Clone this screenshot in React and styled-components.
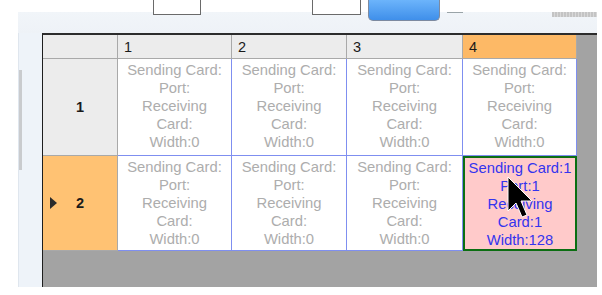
import { createGlobalStyle, styled } from "styled-components";

const GlobalStyle = createGlobalStyle`
  html, body {
    margin: 0;
    padding: 0;
    background: #ffffff;
    font-family: "Liberation Sans", Arial, sans-serif;
  }
`;

const Page = styled.div`
  width: 602px;
  height: 295px;
  overflow: hidden;
  background: #ffffff;
`;

const Toolbar = styled.div`
  display: flex;
  align-items: flex-start;
  height: 33px;
  margin-left: 18px;
  width: 579px;
  background: linear-gradient(#ffffff 0, #ffffff 12px, #f1f5f9 12px, #eef2f7 100%);
  box-sizing: border-box;
`;

const Field = styled.div`
  width: ${(p) => p.$w}px;
  height: 15px;
  margin-left: ${(p) => p.$gap}px;
  box-sizing: border-box;
  background: #ffffff;
  border: 1px solid #6a6a6a;
  border-top: none;
`;

const BlueButton = styled.div`
  width: 72px;
  height: 21px;
  margin-left: 7px;
  box-sizing: border-box;
  border: 1px solid #7d8aa0;
  border-top: none;
  border-radius: 0 0 5px 5px;
  background: linear-gradient(#6cb4fb, #3f8fea);
`;

const Rule = styled.div`
  width: 16px;
  height: 1px;
  margin-top: 12px;
  margin-left: 7px;
  background: #9aa4a8;
`;

const Hatch = styled.div`
  width: 45px;
  height: 5px;
  margin-top: 12px;
  margin-left: auto;
  background: repeating-linear-gradient(90deg, #c4c4c4 0 2px, #d8d8d8 2px 3px);
`;

const Body = styled.div`
  display: flex;
  margin-left: 18px;
  width: 579px;
  height: 254px;
`;

const SideStrip = styled.div`
  width: 24px;
  background: #eef3f9;
  border-left: 1px solid #dfe6ee;
  box-sizing: border-box;
`;

const Thumb = styled.div`
  width: 3px;
  height: 100px;
  margin-top: 37px;
  background: #c9cbce;
`;

const Panel = styled.div`
  flex: 1;
  background: #a3a3a3;
  border-top: 2px solid #2c2c2c;
  border-left: 1px solid #1e1e1e;
  box-sizing: border-box;
`;

const Table = styled.div`
  display: grid;
  grid-template-columns: 75px 114px 115px 116px 114px;
  grid-template-rows: 24px 97px 95px;
  width: 534px;
  font-size: 14.8px;
`;

const Head = styled.div`
  background: ${(p) => (p.$active ? "#fdb966" : "#ececec")};
  border-right: 1px solid #a9a9a9;
  border-bottom: 1px solid #a9a9a9;
  color: #1a1a1a;
  padding-left: 6px;
  display: flex;
  align-items: center;
  font-size: 14.5px;
`;

const Corner = styled.div`
  background: #ececec;
  border-right: 1px solid #a9a9a9;
  border-bottom: 1px solid #a9a9a9;
`;

const RowHead = styled.div`
  position: relative;
  background: ${(p) => (p.$active ? "#ffc273" : "#ececec")};
  border-right: 1px solid #a9a9a9;
  border-bottom: 1px solid #a9a9a9;
  display: flex;
  align-items: center;
  justify-content: center;
  color: #1a1a1a;
  font-weight: bold;
  font-size: 14.5px;
`;

const Pointer = styled.span`
  position: absolute;
  left: 7px;
  top: 50%;
  margin-top: -6px;
  width: 0;
  height: 0;
  border-top: 6px solid transparent;
  border-bottom: 6px solid transparent;
  border-left: 7px solid #2a2a2a;
`;

const Cell = styled.div`
  position: relative;
  background: #ffffff;
  border-right: 1px solid #7f8ff0;
  border-bottom: 1px solid #7f8ff0;
  color: #adadad;
  text-align: center;
  line-height: 18px;
  padding-top: 2px;
  box-sizing: border-box;
  white-space: pre-line;
`;

const ActiveCell = styled(Cell)`
  background: #ffcaca;
  border: 2px solid #0b6e12;
  color: #3434ee;
  padding-top: 1px;
`;

const Cursor = styled.svg`
  position: absolute;
  left: 42px;
  top: 18px;
`;

const rows = [
  { id: 1, active: false },
  { id: 2, active: true },
];

function ArrowCursor() {
  return (
    <Cursor width="28" height="44" viewBox="0 0 28 44">
      <path
        d="M1 1 L1 35 L9 27 L15 41 L20 39 L14 25 L25 25 Z"
        fill="#000000"
        stroke="#ffffff"
        strokeWidth="1"
      />
    </Cursor>
  );
}

export default function App() {
  return (
    <Page>
      <GlobalStyle />
      <Toolbar>
        <Field $w={48} $gap={135} />
        <Field $w={49} $gap={111} />
        <BlueButton />
        <Rule />
        <Hatch />
      </Toolbar>
      <Body>
        <SideStrip>
          <Thumb />
        </SideStrip>
        <Panel>
          <Table>
            <Corner />
            {[1, 2, 3, 4].map((n) => (
              <Head key={n} $active={n === 4}>
                {n}
              </Head>
            ))}
            {rows.map((r) => [
              <RowHead key={`h${r.id}`} $active={r.active}>
                {r.active && <Pointer />}
                {r.id}
              </RowHead>,
              ...[1, 2, 3, 4].map((c) =>
                r.active && c === 4 ? (
                  <ActiveCell key={`${r.id}-${c}`}>
                    {"Sending Card:1\nPort:1\nReceiving\nCard:1\nWidth:128"}
                    <ArrowCursor />
                  </ActiveCell>
                ) : (
                  <Cell key={`${r.id}-${c}`}>
                    {"Sending Card:\nPort:\nReceiving\nCard:\nWidth:0"}
                  </Cell>
                )
              ),
            ])}
          </Table>
        </Panel>
      </Body>
    </Page>
  );
}
